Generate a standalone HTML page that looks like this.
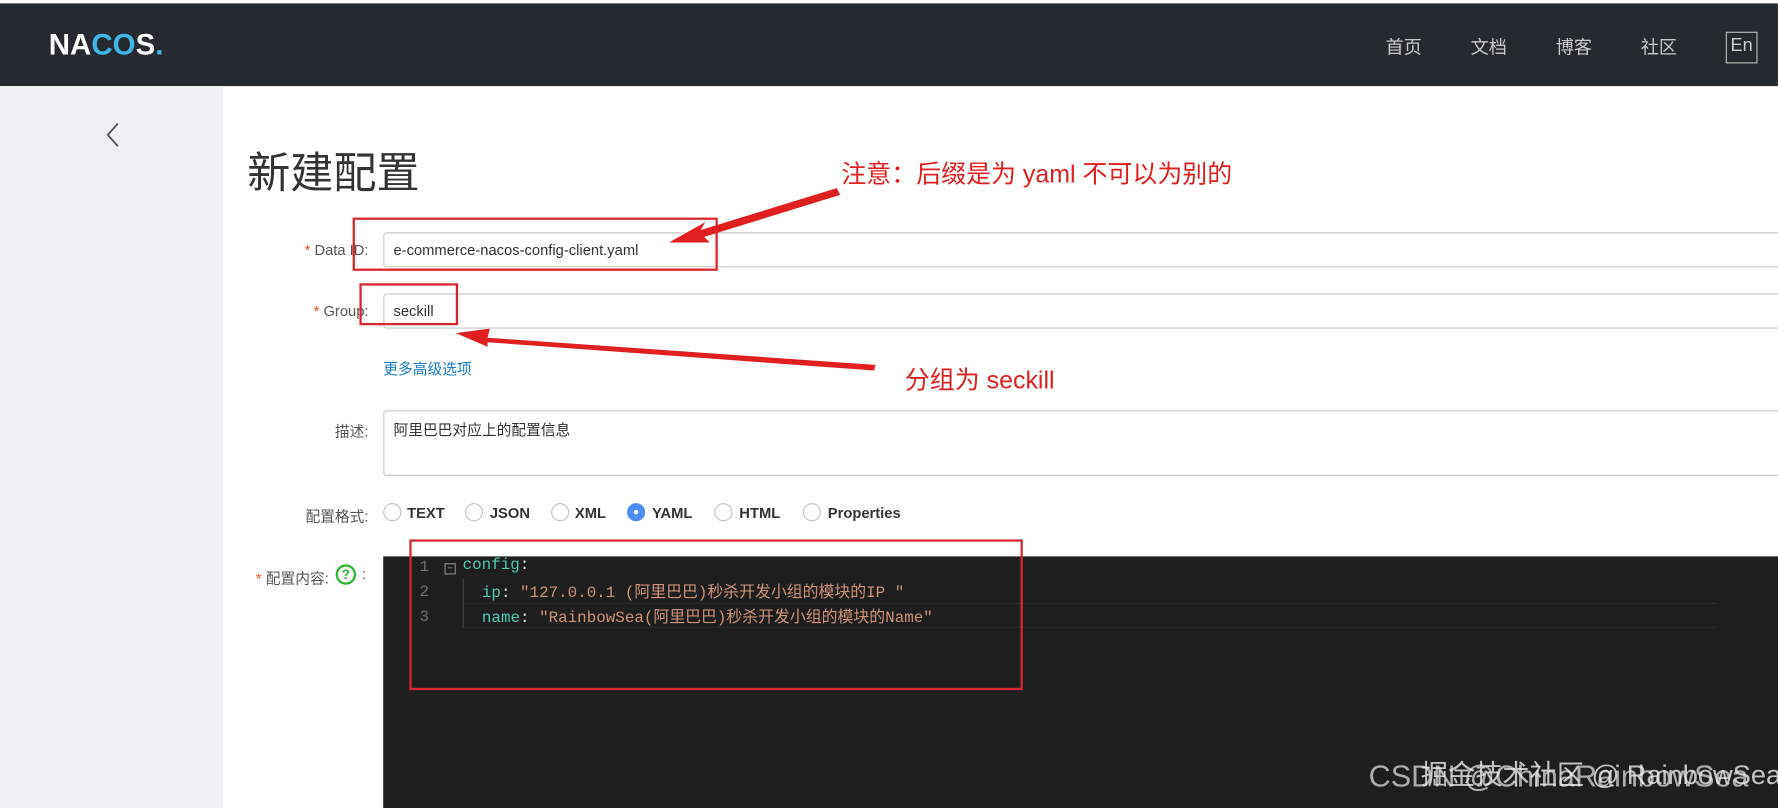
<!DOCTYPE html>
<html><head><meta charset="utf-8"><style>
html,body{margin:0;padding:0;width:1778px;height:808px;overflow:hidden;background:#fff}
#s{position:absolute;left:0;top:0;width:1568px;height:713px;transform:scale(1.1339,1.1332);transform-origin:0 0;font-family:"Liberation Sans","Noto Sans CJK SC",sans-serif;overflow:hidden}
.a{position:absolute;white-space:nowrap}
.hdr{left:0;top:3px;width:1568px;height:73px;background:#252a30}
.nav{color:#c8c8c8;font-size:16px;top:28px}
.side{left:0;top:76px;width:197px;height:637px;background:#eef1f4}
.lbl{font-size:13px;color:#555;text-align:right;width:120px;left:205px}
.st{color:#e8501e}
.inp{border:1px solid #c9c9c9;border-radius:3px;background:#fff;left:338px;width:1240px}
.val{font-size:13px;color:#333}
.rad{width:14px;height:14px;border:1px solid #c4c4c4;border-radius:50%;top:444px;background:#fff}
.rt{font-size:13px;font-weight:bold;color:#333;top:445px}
.ed{left:338px;top:491px;width:1240px;height:230px;background:#1e1e1e}
.code{font-family:"Liberation Mono","Noto Sans CJK SC",monospace;font-size:14px}
.ln{color:#6e6e6e;left:370px}
.red{border:2px solid #d9262e}
.ann{color:#e02020;font-size:22px;font-family:"Liberation Sans","Noto Sans CJK SC",sans-serif}
</style></head><body><div id="s">
<div class="a hdr"></div>
<div class="a" style="left:43px;top:24px;font-size:26px;font-weight:bold;color:#fff">NA<span style="color:#3fb6e6">CO</span>S<span style="color:#3fb6e6">.</span></div>
<div class="a nav" style="left:1222px">首页</div>
<div class="a nav" style="left:1297px">文档</div>
<div class="a nav" style="left:1372px">博客</div>
<div class="a nav" style="left:1447px">社区</div>
<div class="a" style="left:1522px;top:28px;width:26px;height:26px;border:1px solid #bbb;color:#ccc;font-size:16px;text-align:center;line-height:24px">En</div>
<div class="a side"></div>
<svg class="a" style="left:90px;top:107px" width="18" height="24"><path d="M14 2 L5 12 L14 22" stroke="#555" stroke-width="1.6" fill="none"/></svg>
<div class="a" style="left:218px;top:122px;font-size:38px;color:#333">新建配置</div>

<div class="a lbl" style="top:213px"><span class="st">* </span>Data ID:</div>
<div class="a inp" style="top:205px;height:29px"></div>
<div class="a val" style="left:347px;top:213px">e-commerce-nacos-config-client.yaml</div>

<div class="a lbl" style="top:267px"><span class="st">* </span>Group:</div>
<div class="a inp" style="top:259px;height:29px"></div>
<div class="a val" style="left:347px;top:267px">seckill</div>

<div class="a" style="left:338px;top:315px;font-size:13px;color:#1a7cc7">更多高级选项</div>

<div class="a lbl" style="top:370px">描述:</div>
<div class="a inp" style="top:362px;height:56px"></div>
<div class="a val" style="left:347px;top:369px">阿里巴巴对应上的配置信息</div>

<div class="a lbl" style="top:445px">配置格式:</div>
<div class="a rad" style="left:338px"></div><div class="a rt" style="left:359px">TEXT</div>
<div class="a rad" style="left:410px"></div><div class="a rt" style="left:432px">JSON</div>
<div class="a rad" style="left:486px"></div><div class="a rt" style="left:507px">XML</div>
<div class="a rad" style="left:553px;background:#4f8ef7;border-color:#4f8ef7"></div><div class="a" style="left:559px;top:450px;width:4px;height:4px;background:#fff;border-radius:50%"></div><div class="a rt" style="left:575px">YAML</div>
<div class="a rad" style="left:630px"></div><div class="a rt" style="left:652px">HTML</div>
<div class="a rad" style="left:708px"></div><div class="a rt" style="left:730px">Properties</div>

<div class="a lbl" style="top:500px;width:85px;left:205px"><span class="st">* </span>配置内容:</div>
<div class="a" style="left:296px;top:498px;width:14px;height:14px;border:2px solid #2db52d;border-radius:50%;color:#2db52d;font-size:12px;font-weight:bold;text-align:center;line-height:14px">?</div>
<div class="a" style="left:319px;top:499px;font-size:13px;color:#555">:</div>

<div class="a ed"></div>
<div class="a" style="left:408px;top:532px;width:1106px;height:1px;background:#2c2c2c"></div>
<div class="a" style="left:408px;top:553px;width:1106px;height:1px;background:#2c2c2c"></div>
<div class="a" style="left:408px;top:511px;width:1px;height:43px;background:#444"></div>
<div class="a code ln" style="top:493px">1</div>
<div class="a code ln" style="top:515px">2</div>
<div class="a code ln" style="top:537px">3</div>
<div class="a" style="left:392px;top:497px;width:8px;height:8px;border:1px solid #888;font-size:8px;color:#aaa;line-height:8px;text-align:center">−</div>
<div class="a code" style="left:408px;top:491px;color:#4ec9b0">config<span style="color:#ddd">:</span></div>
<div class="a code" style="left:425px;top:512px;color:#4ec9b0">ip<span style="color:#ddd">: </span><span style="color:#ce9178">"127.0.0.1 (阿里巴巴)秒杀开发小组的模块的IP "</span></div>
<div class="a code" style="left:425px;top:534px;color:#4ec9b0">name<span style="color:#ddd">: </span><span style="color:#ce9178">"RainbowSea(阿里巴巴)秒杀开发小组的模块的Name"</span></div>

<div class="a red" style="left:311px;top:192px;width:318px;height:43px"></div>
<div class="a red" style="left:317px;top:250px;width:83px;height:33px"></div>
<div class="a red" style="left:361px;top:476px;width:537px;height:129px"></div>
<div class="a ann" style="left:742px;top:136px">注意：后缀是为 yaml 不可以为别的</div>
<div class="a ann" style="left:798px;top:318px">分组为 seckill</div>
<svg class="a" style="left:0;top:0" width="1568" height="713">
<path d="M738 166 L618 203 L622 196 L590 214 L626 214 L621 209 L741 172 Z" fill="#e02020"/>
<path d="M772 322 L430 298 L432 290 L402 294 L430 306 L430 302 L771 327 Z" fill="#e02020"/>
</svg>
<div class="a" style="left:1207px;top:670px;font-size:27px;color:rgba(220,220,220,0.75)">CSDN @ChinaRainbowSea</div>
<div class="a" style="left:1253px;top:664px;font-size:24px;color:rgba(235,235,235,0.8)">掘金技术社区 @ RainbowSea</div>
</div></body></html>
